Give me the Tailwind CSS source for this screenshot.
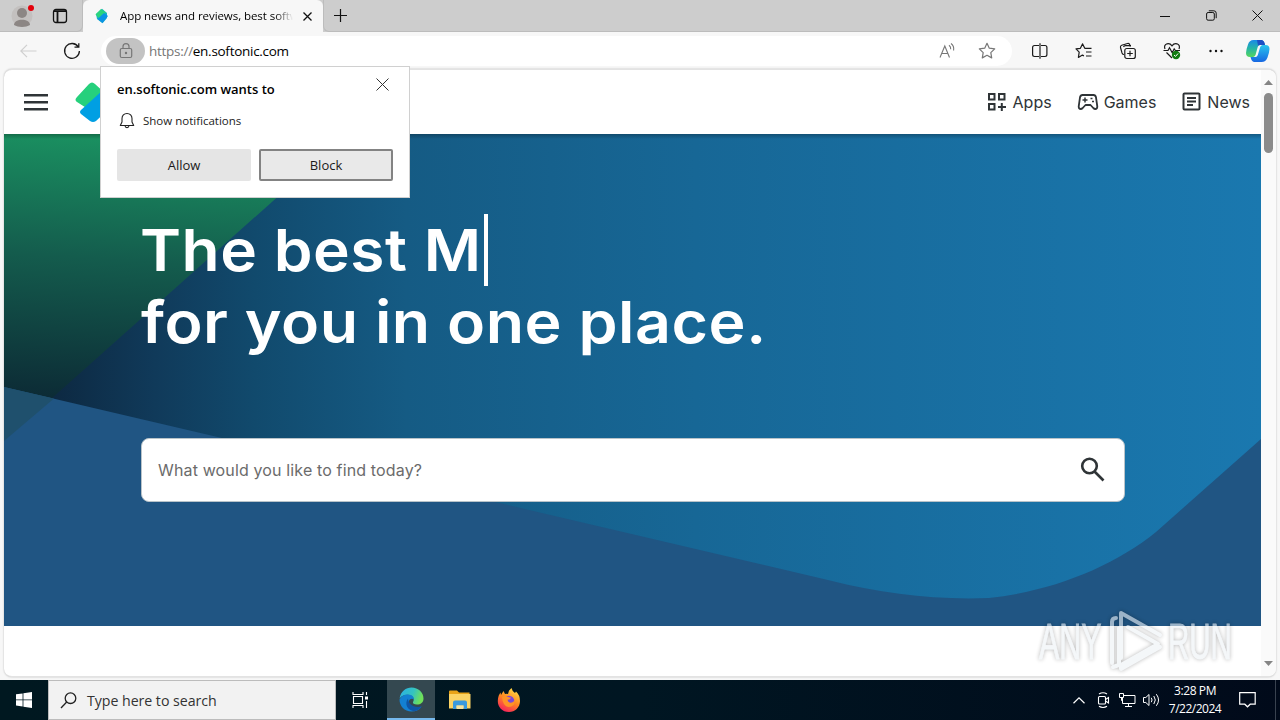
<!DOCTYPE html>
<html lang="en">
<head>
<meta charset="utf-8">
<title>Softonic</title>
<script src="https://cdn.jsdelivr.net/npm/@tailwindcss/browser@4"></script>
</head>
<body class="w-[1280px] h-[720px] overflow-hidden font-['Open_Sans','Noto_Sans',sans-serif] text-black">
<div class="relative flex flex-col w-[1280px] h-[720px] bg-[#f7f7f7] whitespace-nowrap">

  <!-- tab strip -->
  <div class="flex h-8 shrink-0 bg-[#cdcdcd]">
    <div class="flex w-[83px] items-center rounded-br-md border-r border-b border-[#bcbcbc]">
      <svg class="ml-[11px]" width="24" height="26" viewBox="0 0 24 26"><circle cx="11" cy="13" r="10.5" fill="#c3c0bf"/><circle cx="11" cy="10" r="5" fill="#8c8684"/><path d="M3 22c0-7 16-7 16 0-4 2.500-12 2.500-16 0z" fill="#8c8684"/><circle cx="20" cy="5" r="3" fill="#e3000b"/></svg>
      <svg class="ml-[17px]" width="16" height="16" viewBox="0 0 16 16" fill="none" stroke="#111"><rect x="1.500" y="1.500" width="13" height="13" rx="2.500" stroke-width="1.300"/><path d="M2 3.200h12M5.500 4v10" stroke-width="1.800"/></svg>
    </div>
    <div class="flex w-[240px] items-center rounded-t-md bg-[#f7f7f7] text-[11.500px]">
      <svg class="ml-[12px] shrink-0" width="14" height="16" viewBox="0 0 14 16"><path d="M1 6 7 .8 12 5v5L7.500 15.300 2 11z" fill="#19b5c5"/><path d="M0.500 6.500 6 1l5 3.500-6 7z" fill="#2bd47d"/><path d="M2.500 11 9 5l4 3-5.500 7z" fill="#0c93e4"/></svg>
      <span class="ml-[11px] w-[173px] overflow-hidden leading-5 tracking-[-0.060px] [mask-image:linear-gradient(to_right,black_155px,transparent_173px)]">App news and reviews, best software</span>
      <svg class="ml-[10px] shrink-0" width="9" height="9" viewBox="0 0 9 9" stroke="#111" stroke-width="1.300"><path d="M.5.5l8 8M8.500.5l-8 8"/></svg>
    </div>
    <div class="flex flex-1 items-center rounded-bl-md border-b border-l border-[#bcbcbc]">
      <svg class="ml-[9px]" width="15" height="15" viewBox="0 0 15 15" stroke="#111" stroke-width="1.200"><path d="M7.500 1v13M1 7.500h13"/></svg>
      <svg class="ml-auto" width="10" height="10" viewBox="0 0 10 10" stroke="#111"><path d="M0 5.500h10"/></svg>
      <svg class="ml-[36px]" width="11" height="11" viewBox="0 0 11 11" fill="none" stroke="#111"><rect x=".6" y="2.500" width="7.700" height="7.700" rx="1.500"/><path d="M2.800.8h5q2.400 0 2.400 2.400v5"/></svg>
      <svg class="mr-[17px] ml-[35px]" width="11" height="11" viewBox="0 0 11 11" stroke="#111"><path d="M.5.5l10 10M10.500.5l-10 10"/></svg>
    </div>
  </div>

  <!-- toolbar -->
  <div class="flex h-[37px] shrink-0 items-center">
    <svg class="ml-[20px]" width="17" height="14" viewBox="0 0 17 14" fill="none" stroke="#cfcfcf" stroke-width="1.200"><path d="M7 .8.8 7 7 13.200M1 7h15.500"/></svg>
    <svg class="ml-[26px]" width="18" height="18" viewBox="0 0 18 18" fill="none" stroke="#1b1b1b" stroke-width="1.300"><path d="M15.300 5A7.400 7.400 0 1 0 16.400 9M15.800 1.200V5.200H11.500"/></svg>
    <div class="ml-[20px] flex h-[30px] w-[911px] items-center rounded-full bg-white">
      <div class="ml-[5px] flex h-[26px] w-[39px] items-center justify-center rounded-full bg-[#c3c3c3]">
        <svg width="14" height="16" viewBox="0 0 14 16" fill="none" stroke="#777" stroke-width="1.200"><rect x="1.300" y="5.500" width="11.400" height="9" rx="1.500"/><path d="M4 5.500V3.600a3 3 0 0 1 6 0v1.900"/><circle cx="7" cy="10" r=".6" fill="#777"/></svg>
      </div>
      <span class="ml-[4px] text-[13.500px] leading-5 tracking-[-0.280px]"><span class="text-[#767676]">https://</span>en.softonic.com</span>
      <svg class="ml-auto" width="18" height="18" viewBox="0 0 18 18" fill="none" stroke="#777" stroke-width="1.100"><path d="M1 15.500 5.800 4l4.700 11.500M2.700 11.500h6.200M10 3.300q2 1.500 1.700 4M12 1.500q3.400 2.500 2.600 7"/></svg>
      <svg class="ml-[21px] mr-[16px]" width="18" height="18" viewBox="0 0 18 18" fill="none" stroke="#777" stroke-width="1.200" stroke-linejoin="round"><path d="M9 1.300l2.300 4.900 5.400.7-3.900 3.700.9 5.300L9 13.300l-4.700 2.600.9-5.300L1.300 6.900l5.400-.7z"/></svg>
    </div>
    <svg class="ml-[19px]" width="18" height="16" viewBox="0 0 18 16" fill="none" stroke="#1b1b1b" stroke-width="1.200"><path d="M8 2.500H3.500Q1.600 2.500 1.600 4.400v7.200q0 1.900 1.900 1.900H8M10 2.500h4q1.900 0 1.900 1.900v7.200q0 1.900-1.900 1.900h-4M9 .3v15.400"/></svg>
    <svg class="ml-[26px]" width="18" height="18" viewBox="0 0 18 18" fill="none" stroke="#1b1b1b" stroke-width="1.200" stroke-linejoin="round"><path d="M9.800 6.300 7.500 1.900 5.400 6.300l-4.400.6 3.200 3.300-.8 5.200 4-2.300 1.500.8M9.500 6.300h7M11 10h5.500M11 14h5.500"/></svg>
    <svg class="ml-[26px]" width="18" height="18" viewBox="0 0 18 18" fill="none" stroke="#1b1b1b" stroke-width="1.200"><rect x="5.800" y="6.500" width="10.500" height="10" rx="2"/><path d="M11 8.700v5.600M8.200 11.500h5.600M5 12.500q-1.300 0-2-1.600L1.500 5.500q-.5-1.700 1.200-2.300L8.500 1.500q1.800-.4 2.300 1.300l.5 1.800M4.500 5q.5-1.300 2-1.300H12"/></svg>
    <svg class="ml-[26px]" width="19" height="18" viewBox="0 0 19 18" fill="none" stroke="#1b1b1b" stroke-width="1.200"><path d="M2 7Q.5 3 4 1.800 7 1 9 3.800 11 1 14 1.800 17.500 3 16 7M.5 8.500H5l1.500-2.700 2.700 5 2-4 1.200 1.700H17M3.500 10.500 9 16"/><circle cx="13" cy="13" r="4.200" fill="#107c10" stroke="none"/><path d="M11 13l1.500 1.400 2.600-2.900" stroke="#fff" stroke-width="1"/></svg>
    <svg class="ml-[26px]" width="16" height="4" viewBox="0 0 16 4" fill="#111"><circle cx="2.500" cy="2" r="1.200"/><circle cx="8" cy="2" r="1.200"/><circle cx="13.500" cy="2" r="1.200"/></svg>
    <svg class="ml-[21px]" width="26" height="24" viewBox="0 0 26 24">
      <defs><linearGradient id="cpa" x1="0" y1="0" x2="0" y2="1"><stop offset="0" stop-color="#1989e8"/><stop offset=".5" stop-color="#25b5a5"/><stop offset="1" stop-color="#56d65e"/></linearGradient><linearGradient id="cpb" x1="0" y1="0" x2="0" y2="1"><stop offset="0" stop-color="#27c5ee"/><stop offset="1" stop-color="#1767e2"/></linearGradient></defs>
      <path d="M17.500 6h3q4 0 4 4-.3 4-2 8.500Q20.800 23 16.500 23H9q-2.500-.3-3.500-5h5q1.700 0 2.300-2l2.400-8q.5-1.700 2.300-2z" fill="url(#cpb)"/>
      <path d="M8.500 1h8q2.800.3 3.500 5h-5q-1.700 0-2.300 2L10.500 16q-.5 1.700-2.300 2H5q-4-.2-4-4 .3-4 2-8.500Q4.300 1 8.500 1z" fill="url(#cpa)"/>
      <path d="M12 1h4.500q2.800.3 3.500 5h-5q-1.200 0-2 .8z" fill="#1c4fc4"/>
    </svg>
  </div>

  <!-- page viewport -->
  <div class="mx-1 flex h-[608px] shrink-0 overflow-hidden rounded-lg border-y border-[#e3e3e3] bg-white shadow-[0_0_2px_#0004]">
    <div class="flex w-[1257px] shrink-0 flex-col">
      <header class="flex h-16 shrink-0 items-center pb-px font-[Inter,sans-serif] text-base text-[#2f3437]">
        <svg class="ml-5" width="24" height="18" viewBox="0 0 24 18" fill="#2f3437"><path d="M0 1h24v2.500H0zM0 8h24v2.500H0zM0 15h24v2.500H0z"/></svg>
        <svg class="ml-[27px]" width="40" height="42" viewBox="0 0 40 42"><path d="M2 16 14 3q3-3 6 0l12 11-19 14L2 21q-3-2 0-5z" fill="#26d07c"/><path d="M6 29 28 9l10 10q2 3 0 5L21 40q-3 2-6 0L6 33q-2-2 0-4z" fill="#009fe3"/></svg>
        <nav class="ml-auto mr-[11px] flex items-center">
          <svg width="19" height="20" viewBox="0 0 19 20" fill="none" stroke="#2f3437" stroke-width="2"><path d="M2 2h5.500v5.500H2zM12 2h5.500v5.500H12zM2 12h5.500v5.500H2zM14.800 11v8M11 15h8"/></svg>
          <span class="ml-[7px]">Apps</span>
          <svg class="ml-[25px]" width="22" height="18" viewBox="0 0 22 18" fill="none" stroke="#2f3437" stroke-width="1.800" stroke-linejoin="round"><path d="M5.500 2h11q2 0 2.500 2.300l1.300 9.200q0 2.500-2 2.500-1 0-2-1l-2.800-3h-5l-2.800 3q-1 1-2 1-2 0-2-2.500L3 4.300Q3.500 2 5.500 2z"/><path d="M8 4.500v5M5.500 7h5M13.500 5.500h2M15 8.500h2" stroke-width="1.500"/></svg>
          <span class="ml-[5px]">Games</span>
          <svg class="ml-[26px]" width="19" height="19" viewBox="0 0 19 19" fill="none" stroke="#2f3437" stroke-width="2"><rect x="1.500" y="1.500" width="16" height="16" rx="1"/><path d="M5 6h9M5 9.500h9M5 13h6"/></svg>
          <span class="ml-[6px]">News</span>
        </nav>
      </header>
      <main class="relative h-[492px] shrink-0">
        <svg class="absolute inset-0" width="1257" height="492" viewBox="0 0 1257 492">
          <defs>
            <linearGradient id="sea" gradientUnits="userSpaceOnUse" x1="0" y1="0" x2="1257" y2="0"><stop offset=".04" stop-color="#0d2942"/><stop offset=".12" stop-color="#103a5a"/><stop offset=".2" stop-color="#114a6d"/><stop offset=".32" stop-color="#155b84"/><stop offset=".55" stop-color="#176796"/><stop offset="1" stop-color="#1a78af"/></linearGradient>
            <linearGradient id="leaf" gradientUnits="userSpaceOnUse" x1="30" y1="0" x2="10" y2="265"><stop offset="0" stop-color="#1a8f60"/><stop offset=".45" stop-color="#145c4d"/><stop offset="1" stop-color="#0c2a35"/></linearGradient>
            <linearGradient id="shade" x1="0" y1="0" x2="0" y2="1"><stop offset="0" stop-opacity=".25"/><stop offset="1" stop-opacity="0"/></linearGradient>
          </defs>
          <path d="M0 0h1257v492H0z" fill="url(#sea)"/>
          <path d="M0 0h344L0 307z" fill="url(#leaf)"/>
          <path d="M0 253 826 446.500C880 460 930 466 985 464 1050 457 1110 432 1152 398L1257 305V492H0z" fill="#205583"/>
          <path d="M0 253 50 264.500 0 307z" fill="#1f506d"/>
          <path d="M0 0h1257v5H0z" fill="url(#shade)"/>
        </svg>
        <div class="relative flex flex-col pl-[137px] pt-[80px]">
          <h1 class="font-[Inter,sans-serif] text-[58px] font-semibold leading-[72px] text-white">
            <span class="flex"><span class="-ml-px origin-left scale-x-[1.072] tracking-[0.500px]">The best M</span><span class="ml-[25px] h-[72px] w-[4px] bg-white"></span></span>
            <span class="block w-fit origin-left scale-x-[1.08] tracking-[0.500px]">for you in one place.</span>
          </h1>
          <div class="mt-[80px] flex h-[64px] w-[984px] items-center rounded-lg border border-[#b9c3c9] bg-white px-4 font-[Inter,sans-serif] text-base text-[#6b6b6b]">
            <span class="tracking-[0.140px]">What would you like to find today?</span>
            <svg class="ml-auto mr-[3px] -mt-[2px]" width="25" height="25" viewBox="0 0 25 25" fill="none" stroke="#2f3437" stroke-width="2.600"><circle cx="9.500" cy="9" r="7.300"/><path d="M14.500 14.500 23.500 23.500"/></svg>
          </div>
        </div>
      </main>
    </div>
    <div class="flex flex-1 flex-col items-center justify-between bg-[#fafafa] pt-[10px] pb-[10px]">
      <div class="flex flex-col items-center gap-[8px]">
        <svg width="9" height="5" viewBox="0 0 9 5" fill="#858585"><path d="M0 5 4.500 0 9 5z"/></svg>
        <div class="h-[60px] w-[9px] rounded-full bg-[#8b8b8b]"></div>
      </div>
      <svg width="9" height="5" viewBox="0 0 9 5" fill="#858585"><path d="M0 0 4.500 5 9 0z"/></svg>
    </div>
  </div>

  <!-- taskbar -->
  <div class="mt-auto flex h-10 shrink-0 items-center bg-[linear-gradient(to_right,#001820,#001622_50%,#010a1a)] text-white">
    <svg class="ml-[16px]" width="16" height="16" viewBox="0 0 16 16" fill="#fff"><path d="M0 2.300 6.600 1.400V7.500H0zM7.400 1.300 16 0v7.500H7.400zM0 8.300h6.600v6.100L0 13.500zM7.400 8.300H16V16l-8.600-1.200z"/></svg>
    <div class="ml-[16px] flex h-10 w-[288px] items-center border border-[#bcbcbc] bg-[#f2f2f2] text-[14.200px] text-[#333]">
      <svg class="ml-[11px]" width="17" height="17" viewBox="0 0 17 17" fill="none" stroke="#222" stroke-width="1.300"><circle cx="10.500" cy="6.200" r="5.300"/><path d="M6.700 10 1 16"/></svg>
      <span class="ml-[10px] pt-px tracking-[-0.050px]">Type here to search</span>
    </div>
    <svg class="ml-[16px]" width="17" height="16" viewBox="0 0 17 16" fill="none" stroke="#fff" stroke-width="1.100"><path d="M1 0v2.500h10V0M1 16v-2.500h10V16M1.500 4.500h9v7h-9zM14.500 0v3M14.500 9v7"/><path d="M13 4.500h3v3h-3z" fill="#fff" stroke="none"/></svg>
    <div class="ml-[18px] flex h-10 w-12 flex-col items-center border-b-2 border-[#76b9ed] bg-[#344850] pt-[7px]">
      <svg width="25" height="25" viewBox="0 0 25 25"><defs><linearGradient id="edg" x1="0" y1="0" x2="1" y2=".3"><stop offset="0" stop-color="#2bb0e8"/><stop offset=".6" stop-color="#34c3c0"/><stop offset="1" stop-color="#6fe05a"/></linearGradient></defs><path d="M.6 11.500C2 4 7 .5 12.500.5c7 0 12 5 12 11 0 4-3 6-6.500 6-3 0-4.500-1-4-2.500 1.500-2 1-6-3.500-7Q4 7 .6 11.500z" fill="url(#edg)"/><path d="M.5 12.500Q3.500 7 9.500 7.500c3.500.2 5.500 2.300 5.500 5-2-1.500-5-.5-5.200 2.500 0 4 5 6.500 12.700 4.700C20 23 16.500 24.500 12.500 24.500 5.500 24.500.5 19 .5 12.500z" fill="#1380d2"/><path d="M9 11.500c-4 5-.5 12.500 6.500 12.700 3-.6 5.500-2.200 7.200-5-7 2.500-13.500-1.700-13.700-7.700z" fill="#0f55a5"/></svg>
    </div>
    <svg class="ml-[14px]" width="22" height="20" viewBox="0 0 22 20"><path d="M0 1.500Q0 .5 1 .5h7l2 2h10.500v4H0z" fill="#e8a317"/><path d="M0 4h21.500v14.500H0z" fill="#fbd364"/><path d="M4 19v-6.500q0-2 2-2h10q2 0 2 2V19H14.500v-3.500h-7V19z" fill="#3b9ade"/><path d="M7.500 15.500h7V19h-7z" fill="#f7e3a0"/></svg>
    <svg class="ml-[26px]" width="24" height="24" viewBox="0 0 24 24"><defs><linearGradient id="fx" x1=".8" y1="0" x2=".3" y2="1"><stop offset="0" stop-color="#ffe14a"/><stop offset=".5" stop-color="#ff8a20"/><stop offset="1" stop-color="#f5205c"/></linearGradient></defs><path d="M12 24C5 24 .8 19 .8 13c0-4 1.500-7 2.700-8.500L4 7l2.500-4L8 6q1.500-.4 3 0 .5-4 3.500-6 .5 3 3.500 5l1-1.500q4 3.500 4 9.500C23 19.500 18 24 12 24z" fill="url(#fx)"/><circle cx="12" cy="13" r="5.300" fill="#7a48d8"/><path d="M5 9q3-2 6 0l3 .8q-1 2-3.500 2 0 2.500 3 3 3 0 4.200-3.300.8 7-6 7.500-6-.5-6.700-10z" fill="#ff9325"/></svg>
    <svg class="ml-auto" width="12" height="7" viewBox="0 0 12 7" fill="none" stroke="#fff" stroke-width="1.200"><path d="M.5 6.300 6 .9l5.500 5.400"/></svg>
    <svg class="ml-[12px]" width="13" height="16" viewBox="0 0 13 16" fill="none" stroke="#fff" stroke-width="1.100"><rect x="1.500" y="4.500" width="7" height="7.500" rx="1"/><path d="M8.500 7.500 11.500 5.500v5.500l-3-2M2 2Q6 -.5 10 2M2 14.200q4 2.500 8 0"/></svg>
    <svg class="ml-[9px]" width="17" height="14" viewBox="0 0 17 14" fill="none" stroke="#fff"><path d="M5 2.500h11v8H3.500V5M9.500 10.500v3M6 13.500h7M.5.500h4v4h-4zM2.500 4.500v3h1"/></svg>
    <svg class="ml-[7px]" width="17" height="14" viewBox="0 0 17 14" fill="none" stroke="#fff"><path d="M.5 4.500h2.300L6 1.500v11L2.800 9.500H.5zM8.300 4.800q1.500 2.200 0 4.400M10.800 3q3 4 0 8M13.300 1.200q4.500 5.800 0 11.600"/></svg>
    <div class="ml-[7px] flex w-[56px] flex-col items-center text-[12px] leading-[18px]"><span class="tracking-[-0.400px]">3:28 PM</span><span class="tracking-[-0.500px]">7/22/2024</span></div>
    <svg class="ml-[16px] mr-[19px]" width="17" height="16" viewBox="0 0 17 16" fill="none" stroke="#fff" stroke-width="1.200"><path d="M.7.700h15.500v11.500h-5l-2.700 2.600-2.700-2.600H.7z"/></svg>
    <div class="mr-[4px] h-10 w-px bg-[#39424f]"></div>
  </div>

  <!-- permission prompt -->
  <div class="absolute left-[100px] top-[66px] flex h-[132px] w-[310px] flex-col border border-[#d0d0d0] bg-white px-4 text-[#1b1b1b]">
    <div class="mt-[10px] flex items-start justify-between">
      <span class="mt-[2px] text-[13px] font-semibold leading-5 text-black">en.softonic.com wants to</span>
      <svg class="mr-[4px] mt-px" width="13" height="13" viewBox="0 0 13 13" stroke="#333"><path d="M.5.500l12 12M12.500.500l-12 12"/></svg>
    </div>
    <div class="mt-[12px] flex h-5 items-center text-[11.500px]">
      <svg class="ml-[2px]" width="16" height="18" viewBox="0 0 16 18" fill="none" stroke="#222" stroke-width="1.100" stroke-linejoin="round"><path d="M8 1.500c-3 0-5 2.200-5 5V10l-1.700 3.500h13.400L13 10V6.500c0-2.800-2-5-5-5zM6 13.700c.3 2.600 3.700 2.600 4 0"/></svg>
      <span class="ml-[8px]">Show notifications</span>
    </div>
    <div class="mt-[18px] flex gap-2 text-[13px]">
      <div class="flex h-8 w-[134px] items-center justify-center rounded-[2px] bg-[#e5e5e5] pt-px">Allow</div>
      <div class="flex h-8 w-[134px] items-center justify-center rounded-[2px] border-2 border-[#838383] bg-[#e9e9e9] pt-px">Block</div>
    </div>
  </div>

  <!-- watermark -->
  <div class="absolute left-[1038px] top-[608px] flex h-[66px] w-[200px] items-center opacity-60 drop-shadow-[0_0_2px_#0007]">
    <svg width="200" height="66" viewBox="0 0 200 66" font-family="Liberation Sans" font-size="49" fill="#eef2f6" stroke="#eef2f6" stroke-width=".8">
      <text transform="translate(1 51) scale(.68 1)" textLength="92" lengthAdjust="spacingAndGlyphs">ANY</text>
      <text transform="translate(130 51) scale(.68 1)" textLength="94" lengthAdjust="spacingAndGlyphs">RUN</text>
      <g fill="none" stroke-width="4" stroke-linejoin="round" stroke-linecap="round"><path d="M83 50V5L122 27M90 19 120 36 83 57V61L122 39M74 55V14q0-4 4-4M81 20v37l-6 2"/></g>
    </svg>
  </div>
</div>
</body>
</html>
